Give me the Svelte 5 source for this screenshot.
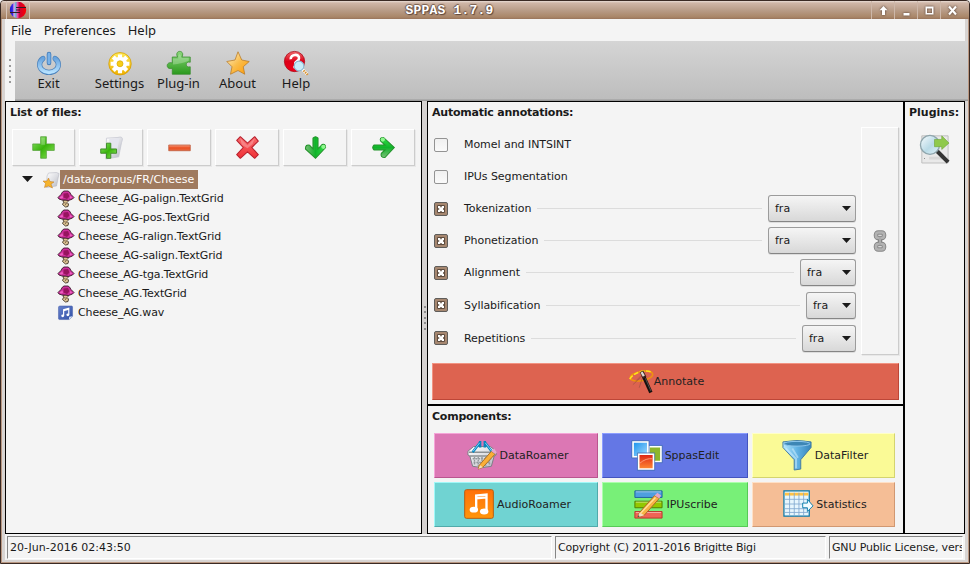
<script>
  const tools = [
    { id: 'exit', label: 'Exit', w: 58 },
    { id: 'settings', label: 'Settings', w: 62 },
    { id: 'plugin', label: 'Plug-in', w: 56 },
    { id: 'about', label: 'About', w: 62 },
    { id: 'help', label: 'Help', w: 55 }
  ];
  const fileButtons = ['plus', 'adddir', 'minus', 'cross', 'down', 'right'];
  const files = ['Cheese_AG-palign.TextGrid', 'Cheese_AG-pos.TextGrid', 'Cheese_AG-ralign.TextGrid', 'Cheese_AG-salign.TextGrid', 'Cheese_AG-tga.TextGrid', 'Cheese_AG.TextGrid'];
  const steps = [
    { name: 'Momel and INTSINT', on: false, h: 32 },
    { name: 'IPUs Segmentation', on: false, h: 32 },
    { name: 'Tokenization', on: true, w: 88, h: 32 },
    { name: 'Phonetization', on: true, w: 88, h: 32 },
    { name: 'Alignment', on: true, w: 56, h: 33 },
    { name: 'Syllabification', on: true, w: 50, h: 33, late: true },
    { name: 'Repetitions', on: true, w: 54, h: 33, late: true }
  ];
  const components = [
    { id: 'basket', name: 'DataRoamer', cls: 'pink' },
    { id: 'images', name: 'SppasEdit', cls: 'blue' },
    { id: 'funnel', name: 'DataFilter', cls: 'yellow' },
    { id: 'audio', name: 'AudioRoamer', cls: 'teal' },
    { id: 'scribe', name: 'IPUscribe', cls: 'green' },
    { id: 'table', name: 'Statistics', cls: 'peach' }
  ];
</script>

{#snippet icon(id, size)}
  <svg width={size} height={size} viewBox="0 0 32 32" class="ic">
    {#if id === 'exit'}
      <path d="M8 10A12.500 10.500 0 1 0 24 10" fill="none" stroke="#4b83bd" stroke-width="7" stroke-linecap="round" />
      <path d="M8 10A12.500 10.500 0 1 0 24 10" fill="none" stroke="url(#gblue)" stroke-width="5" stroke-linecap="round" />
      <path d="M16 4V15" stroke="#c8cdd3" stroke-width="9" />
      <path d="M16 4V16" stroke="#3f78b6" stroke-width="6" stroke-linecap="round" />
      <path d="M16 4V15.500" stroke="#79b2e8" stroke-width="4" stroke-linecap="round" />
    {:else if id === 'settings'}
      <circle cx="16" cy="17" r="15" fill="url(#ggold)" stroke="#d39b00" />
      <path d="M16 4.500V29.500M3.500 17H28.500M7 8L25 26M25 8L7 26" stroke="#fff" stroke-width="5.500" />
      <circle cx="16" cy="17" r="9.500" fill="#fff" />
      <circle cx="16" cy="17" r="4" fill="#f7ce18" stroke="#d9a900" />
    {:else if id === 'plugin'}
      <path d="M7 31V23C-2 26-2 13 7 16V8H14C9-2 25-2 20 8H31V15C24 13 24 23 31 21V31Z" fill="url(#ggreen)" stroke="#388b2d" />
      <path d="M8 10H15C14 3 19 2 19 9H29V13C21 16 17 17 8 18Z" fill="#fff" opacity=".25" />
    {:else if id === 'about'}
      <path d="M16 1L21 12L31 14L23 21L25 31L16 26L6 31L8 21L1 14L12 12Z" fill="url(#gstar)" stroke="#b77a26" />
    {:else if id === 'help'}
      <circle cx="14" cy="14" r="13.5" fill="url(#gred)" stroke="#a70010" />
      <path d="M9 11C8 4 21 3 20 10C20 14 14 14 15 17" fill="none" stroke="#fff" stroke-width="3.5" /><path d="M12.500 20H16V23H12.500Z" fill="#fff" />
      <circle cx="20" cy="20" r="6.5" fill="#c9edf9" stroke="#8bb9d2" stroke-width="1.5" />
      <path d="M25 25L31 31" stroke="#fff" stroke-width="4" /><path d="M26 26L32 32" stroke="#d79232" stroke-width="3" stroke-dasharray="2 1" />
    {:else if id === 'plus'}
      <path d="M12 1H20V11H31V20H20V31H12V20H1V11H12Z" fill="url(#gplus)" stroke="#4f9c34" />
      <path d="M13 2H18V12H13Z" fill="#fff" opacity=".25" />
    {:else if id === 'minus'}
      <path d="M1 12.500H31V20.500H1Z" fill="url(#gminus)" stroke="#bb5535" />
    {:else if id === 'adddir'}
      <path d="M9 3L25 2C32 0 32 4 30 9L26 29L8 32Z" fill="url(#gsilver)" stroke="#c3c5cf" />
      <path d="M13 4L27 3L23 24L11 27Z" fill="#e4e5ee" />
      <path d="M9 10H15V18H23V24H15V31H9V24H1V18H9Z" fill="url(#gplus)" stroke="#3c8926" stroke-width="1.3" />
    {:else if id === 'folder'}
      <path d="M11 2L27 1L32 3L27 28L7 31L8 8Z" fill="url(#gsilver)" stroke="#aeb1bd" />
      <path d="M11 12L14 19L22 20L16 24L19 32L11 28L3 31L5 23L0 18L8 18Z" fill="#f6b42d" stroke="#bd7626" />
    {:else if id === 'cross'}
      <path d="M6 1L16 10L26 1L31 7L22 16L31 26L26 31L16 22L6 31L1 26L10 16L1 6Z" fill="url(#gcross)" stroke="#b9202d" stroke-width="1.500" stroke-linejoin="round" />
      <path d="M6 3L16 13L26 3L23 11L16 17L8 12Z" fill="#fff" opacity=".25" />
    {:else if id === 'down' || id === 'right'}
      <g transform={id === 'right' ? 'rotate(-90 16 16)' : ''}>
        <path d="M12.500 3Q16-1 19.500 3V18L25 12Q30 10 30 16L16 31L2 18Q2 11 8 13L12.500 18Z" fill="url(#garrow)" stroke="#22932a" stroke-width="1.500" />
        <circle cx="27" cy="15" r="3" fill="#a7ffa1" opacity=".8" />
      </g>
    {:else if id === 'mushroom'}
      <path d="M10 18H21L20 21L18 23L21 26L20 31L15 32L9 27L11 23Z" fill="#dcc291" stroke="#514535" stroke-width="2" />
      <path d="M12 23L17 25L14 28" fill="none" stroke="#6b5a42" stroke-width="1.500" />
      <path d="M0 13L6 7L9 2L12 0H20L23 2L26 7L32 13L29 16L21 19L15 18L8 18L2 16Z" fill="#cd2f9b" stroke="#3c1a2c" stroke-width="1.800" />
      <path d="M3 13L9 9L10 14L6 15ZM23 9L29 13L24 15Z" fill="#ee62c2" /><path d="M11 5L20 4L23 11L18 16L11 13Z" fill="#97145f" />
    {:else if id === 'wav'}
      <path d="M3 2H29Q31 2 31 5V24L24 31H3Q1 31 1 28V4Z" fill="url(#gwav)" stroke="#3d56a6" />
      <path d="M12 23V10L23 7V21M12 12L23 9" fill="none" stroke="#fff" stroke-width="2.500" /><circle cx="10" cy="23" r="3" fill="#fff" /><circle cx="21" cy="21" r="3" fill="#fff" />
      <path d="M23 32L31 24L24 25Z" fill="#d9e6fa" />
    {:else if id === 'wand'}
      <ellipse cx="16" cy="9" rx="14.5" ry="6" transform="rotate(-10 16 9)" fill="none" stroke="#ef9110" stroke-width="2" />
      <path d="M1 13C5 5 21 0 29 4" fill="none" stroke="#ffe21c" stroke-width="2" stroke-dasharray="6 2" />
      <path d="M8 16L15 9M5 20L16 10M13 24L17 12" stroke="#5c3a31" opacity=".4" />
      <path d="M18 8L28 30" stroke="#17120f" stroke-width="4.5" /><path d="M16 3L20 11" stroke="#3c211b" stroke-width="5" /><path d="M16 4L19 9" stroke="#dfd9d2" stroke-width="3" /><path d="M21 12L28 28" stroke="#646464" />
    {:else if id === 'basket'}
      <path d="M1 12L7 7H25L31 12V16L29 17L26 28Q16 31 6 28L3 17L1 16Z" fill="url(#gsilver)" stroke="#777c81" />
      <path d="M2 13H30M3 17H29" stroke="#8c9194" stroke-width="1.500" />
      <path d="M6 20H26M7 24H25M8 18V27M12 18V28M16 18V28M20 18V28M24 18V27" stroke="#92989b" stroke-width="1.5" stroke-dasharray="2 1" />
      <path d="M6 13L14 2.500M19 2.500L27 13M14 1V8M19 1V8" fill="none" stroke="#0685bd" stroke-width="2.600" /><path d="M6.500 12L13.500 3M19.500 3L26.500 12" stroke="#82d6fb" />
      <path d="M13 27L26 12L30 15L17 29L12 31Z" fill="#faae37" stroke="#a46d27" /><path d="M26 12L29 9L32 13L30 15Z" fill="#e7a7cf" /><path d="M12 31L14 27L17 29Z" fill="#f7dbb5" />
    {:else if id === 'images'}
      <path d="M18 7H31V23H18Z" fill="#8db62b" stroke="#fff" stroke-width="2" /><path d="M1 2H17V18H1Z" fill="url(#gpic)" stroke="#fff" stroke-width="2" />
      <path d="M-.2 .8H18.200V14M18.200 5.800H32.200V24.200H24.200M7 19.200H-.2V.8" fill="none" stroke="#406fb0" stroke-width=".8" />
      <path d="M7 15H23V31H7Z" fill="url(#gorange)" stroke="#fff" stroke-width="2" /><path d="M5.800 13.800H24.200V32.200H5.800Z" fill="none" stroke="#406fb0" stroke-width=".8" />
      <path d="M8 25Q15 19 22 20" stroke="#ff9a7a" fill="none" />
    {:else if id === 'funnel'}
      <path d="M1 2Q16-1 31 2V8L20 21V31L13 32V21L1 8Z" fill="url(#gfunnel)" stroke="#41799f" />
      <ellipse cx="16" cy="4" rx="14" ry="2.5" fill="#3d86b5" stroke="#8fc7ed" /><path d="M4 9L15 20V30M11 9L17 19" fill="none" stroke="#d6f2ff" stroke-width="2" opacity=".5" />
    {:else if id === 'audio'}
      <rect x=".7" y=".7" width="30.6" height="30.6" rx="2" fill="url(#gaudio)" stroke="#b65a0c" />
      <path d="M13 22V7L24 6V24M13 10L24 9" fill="none" stroke="#fff" stroke-width="2.5" /><ellipse cx="10.5" cy="22" rx="4.5" ry="3.2" fill="#fff" /><ellipse cx="21.5" cy="24" rx="4.5" ry="3.2" fill="#fff" />
    {:else if id === 'scribe'}
      <path d="M2 2H31V9H2Z" fill="#4e9fdf" stroke="#1f5e9d" /><path d="M2 13H31V20H2Z" fill="#94c700" stroke="#517900" /><path d="M2 24H31V31H2Z" fill="#ef6455" stroke="#b8332b" />
      <path d="M3 3H30M3 14H30M3 25H30" stroke="#fff" opacity=".5" />
      <path d="M7 25L23 7L28 10L12 28L5 30Z" fill="#f8b245" stroke="#a36725" /><path d="M8 26L24 9" stroke="#ffe198" stroke-width="1.5" /><path d="M23 7L26 4L30 7L28 10Z" fill="#e3a5c5" /><path d="M5 30L7 25L12 28Z" fill="#f5ddbd" /><path d="M5 30L6 28L7 29Z" fill="#222" />
    {:else if id === 'table'}
      <path d="M1 2H28V29H1Z" fill="#e7f6fd" stroke="#0877a8" stroke-width="1.3" /><path d="M2 4H27V7H2Z" fill="#ffc245" />
      <path d="M7 4V29M12 4V29M17 4V29M22 4V29M2 11H27M2 16H27M2 21H27M2 25H27" stroke="#81a9cf" stroke-width=".9" />
      <path d="M21 15H26V11L32 18L26 24V20H21Z" fill="#f1fcff" stroke="#087cab" />
    {:else if id === 'search'}
      <path d="M2 2H31V32H2Z" fill="#e9e9e9" stroke="#bbb" /><path d="M10 25H27V28H10Z" fill="#d8d8d8" /><circle cx="5" cy="27" r=".6" fill="#777" />
      <path d="M18 18L22 22" stroke="#888" stroke-width="2.500" /><path d="M19 19L31 31" stroke="#343434" stroke-width="4.5" /><circle cx="11" cy="12" r="10.5" fill="url(#gglass)" stroke="#8fa5ac" stroke-width="1.5" />
      <path d="M16 6H24V2L32 10L24 17V14H16Z" fill="#8fc94b" stroke="#70a73b" stroke-width=".7" />
    {/if}
  </svg>
{/snippet}

<svg width="0" height="0" class="defs">
  <defs>
    <linearGradient id="gblue" x2="0" y2="1"><stop stop-color="#6aa5df" /><stop offset="1" stop-color="#b5e1ff" /></linearGradient>
    <linearGradient id="ggold" x2="0" y2="1"><stop stop-color="#ffea54" /><stop offset="1" stop-color="#efb000" /></linearGradient>
    <linearGradient id="ggreen" x2="0" y2="1"><stop stop-color="#8bd77b" /><stop offset="1" stop-color="#2b991c" /></linearGradient>
    <linearGradient id="gstar" x2="1" y2="1"><stop stop-color="#fff4d1" /><stop offset=".5" stop-color="#fabd4c" /><stop offset="1" stop-color="#ff9900" /></linearGradient>
    <linearGradient id="gred" x2="0" y2="1"><stop stop-color="#ef6a6d" /><stop offset=".5" stop-color="#dd0017" /><stop offset="1" stop-color="#ef0019" /></linearGradient>
    <linearGradient id="gplus" x2="1" y2="1"><stop stop-color="#8de46b" /><stop offset=".5" stop-color="#39b30b" /><stop offset="1" stop-color="#90e660" /></linearGradient>
    <linearGradient id="gminus" x2="0" y2="1"><stop stop-color="#f5a184" /><stop offset=".5" stop-color="#ec5022" /><stop offset="1" stop-color="#e66c43" /></linearGradient>
    <linearGradient id="gsilver" x2="1" y2="1"><stop stop-color="#fff" /><stop offset=".5" stop-color="#dedfe4" /><stop offset="1" stop-color="#b6b8c1" /></linearGradient>
    <linearGradient id="gcross" x2="0" y2="1"><stop stop-color="#f86b6d" /><stop offset="1" stop-color="#f03036" /></linearGradient>
    <linearGradient id="garrow" x2="1" y2="0"><stop stop-color="#78bd76" /><stop offset=".5" stop-color="#10b42a" /><stop offset="1" stop-color="#31e447" /></linearGradient>
    <linearGradient id="gwav" x2="1" y2="1"><stop stop-color="#6680ca" /><stop offset="1" stop-color="#3151a8" /></linearGradient>
    <linearGradient id="gpic" x2="1" y2="1"><stop stop-color="#1592ec" /><stop offset="1" stop-color="#a8ddff" /></linearGradient>
    <linearGradient id="gorange" x2="0" y2="1"><stop stop-color="#dc2013" /><stop offset="1" stop-color="#ff8b35" /></linearGradient>
    <linearGradient id="gfunnel" x2="1" y2="0"><stop stop-color="#b8e9ff" /><stop offset=".5" stop-color="#62b3e4" /><stop offset="1" stop-color="#3785bc" /></linearGradient>
    <linearGradient id="gaudio" x2="0" y2="1"><stop stop-color="#ff7008" /><stop offset="1" stop-color="#ff960a" /></linearGradient>
    <linearGradient id="gglass" x2="1" y2="1"><stop stop-color="#f8fcfe" /><stop offset=".55" stop-color="#b9dae6" /><stop offset="1" stop-color="#e1f2f8" /></linearGradient>
    <linearGradient id="glogo" x2="1" y2="0"><stop stop-color="#1414cf" /><stop offset=".18" stop-color="#3b2de8" /><stop offset=".25" stop-color="#e9a4e5" /><stop offset=".36" stop-color="#63b8d5" /><stop offset=".47" stop-color="#e84cae" /><stop offset=".6" stop-color="#d0002d" /><stop offset="1" stop-color="#ff0000" /></linearGradient>
  </defs>
</svg>

<div class="window">
  <header class="title">
    <div class="logo">
      <svg width="18" height="18" viewBox="0 0 18 18"><circle cx="9" cy="9" r="8.2" fill="url(#glogo)" /><path d="M9 6.500H17M1 11.500H9M7 6.500H11M7 9H11M8 11.500H11" stroke="#351923" stroke-width="1.100" /></svg>
    </div>
    <h1>SPPAS 1.7.9</h1>
    <div class="wm">
      <span><svg viewBox="0 0 9 9"><path d="M4.5 0L8.500 4.200H6V9H3V4.200H.5Z" /></svg></span>
      <span><svg viewBox="0 0 9 9"><path d="M1.5 7H7.5V9.500H1.5Z" /></svg></span>
      <span><svg viewBox="0 0 9 9"><path d="M.5.5H8.5V8.5H.5ZM2 2.500V7H7V2.500Z" fill-rule="evenodd" /></svg></span>
      <span><svg viewBox="0 0 9 9"><path d="M1 .500L8 8.500M8 .500L1 8.500" fill="none" stroke="#fff" stroke-width="2.100" /></svg></span>
    </div>
  </header>

  <div class="client">
    <nav class="menu"><span>File</span><span>Preferences</span><span>Help</span></nav>
    <div class="toolrow">
      <div class="grip"><i></i><i></i><i></i><i></i><i></i></div>
      <div class="toolbar">
        {#each tools as t}
          <button class="tool {t.id}" style="width:{t.w}px">{@render icon(t.id, 24)}<span>{t.label}</span></button>
        {/each}
      </div>
    </div>

    <main>
      <section class="files">
        <h2>List of files:</h2>
        <div class="fbtns">
          {#each fileButtons as b}<button class="raised">{@render icon(b, 23)}</button>{/each}
        </div>
        <ul>
          <li class="root"><svg class="tri" width="11" height="6" viewBox="0 0 11 6"><path d="M0 0H11L5.5 6Z" fill="#1a1a1a" /></svg>{@render icon('folder', 16)}<span class="sel">/data/corpus/FR/Cheese</span></li>
          {#each files as f}<li>{@render icon('mushroom', 16)}<span>{f}</span></li>{/each}
          <li>{@render icon('wav', 15)}<span class="wv">Cheese_AG.wav</span></li>
        </ul>
      </section>

      <div class="sash"><i></i><i></i><i></i><i></i><i></i></div>

      <div class="mid">
        <section class="auto">
          <h2>Automatic annotations:</h2>
          <div class="annot">
            <div class="steps">
              {#each steps as s}
                <div class="step" class:late={s.late} class:align={s.name === 'Alignment'} style="height:{s.h}px">
                  <span class="check" class:on={s.on}>
                    {#if s.on}<svg width="14" height="14" viewBox="0 0 14 14"><path d="M3.5 3.5H10.5V10.5H3.5Z" fill="#fff" stroke="#5e4b3d" /><path d="M7 4V5.2M7 9V10M4 7H5.2M9 7H10" stroke="#5e4b3d" stroke-width="1.4" /></svg>{/if}
                  </span>
                  <span class="name">{s.name}</span>
                  {#if s.w}
                    <span class="rule"></span>
                    <button class="combo" style="width:{s.w}px">fra<svg width="9" height="5" viewBox="0 0 9 5"><path d="M0 0H9L4.5 5Z" fill="#1a1a1a" /></svg></button>
                  {/if}
                </div>
              {/each}
            </div>
            <button class="link raised">
              <svg width="14" height="22" viewBox="0 0 14 22"><g fill="none" stroke="#858585"><rect x="3" y="2.5" width="8" height="5.5" rx="2.2" stroke-width="4.5" /><rect x="3" y="14" width="8" height="5.5" rx="2.2" stroke-width="4.5" /><path d="M7 7V15" stroke-width="4.5" /></g><g fill="none" stroke="#b2b2b2"><rect x="3" y="2.5" width="8" height="5.5" rx="2.2" stroke-width="2.7" /><rect x="3" y="14" width="8" height="5.5" rx="2.2" stroke-width="2.7" /><path d="M7 7V15" stroke="#aaa" stroke-width="2" /></g></svg>
            </button>
          </div>
          <button class="annotate">{@render icon('wand', 25)}<span>Annotate</span></button>
        </section>
        <section class="comps">
          <h2>Components:</h2>
          <div class="grid">
            {#each components as c}
              <button class="comp {c.cls}">{@render icon(c.id, 30)}<span>{c.name}</span></button>
            {/each}
          </div>
        </section>
      </div>

      <section class="plugins"><h2>Plugins:</h2>{@render icon('search', 29)}</section>
    </main>

    <footer><span>20-Jun-2016 02:43:50</span><span>Copyright (C) 2011-2016 Brigitte Bigi</span><span>GNU Public License, vers</span></footer>
  </div>
</div>

<style>
  * { box-sizing: border-box; }
  :global(body) { margin: 0; overflow: hidden; background: #f4f4f4; }
  button { border: 0; background: none; padding: 0; margin: 0; font: inherit; color: inherit; }
  .defs { position: absolute; }
  .ic { display: block; flex: none; overflow: visible; }
  .window { width: 970px; height: 564px; border: 1px solid #3a2a24; border-radius: 4px 4px 0 0; background: #d8d4d2; font: 11px "DejaVu Sans", sans-serif; color: #1a1a1a; overflow: hidden; box-shadow: inset 0 0 0 1px #b99781; }
  .title { height: 18px; display: flex; align-items: center; background: linear-gradient(#e8dcd5 0, #cfb6a7 2px, #b99d89 9px, #a98668 16px, #98745b 18px); }
  .logo { width: 24px; height: 18px; margin-left: 5px; border: solid #d7c4b8; border-width: 0 1px; display: flex; justify-content: center; }
  h1 { flex: 1; margin: 0 2px 0 0; text-align: center; font: bold 13px "Liberation Mono", monospace; letter-spacing: .2px; color: #fff; text-shadow: 1px 1px 1px #5d4539, -1px 0 1px #74594b, 0 -1px 1px #74594b; }
  .wm { display: flex; height: 18px; padding-right: 6px; }
  .wm span { width: 23px; border-left: 1px solid #cdb7a9; display: flex; align-items: center; justify-content: center; }
  .wm span:first-child, .wm span:last-child { margin-right: 0; }
  .wm svg { width: 9px; height: 9px; overflow: visible; fill: #fff; filter: drop-shadow(0 0 1px #4b352b); }
  .client { margin: 0 4px; height: 541px; display: flex; flex-direction: column; background: #f4f4f4; }
  .menu { height: 22px; display: flex; gap: 12px; align-items: center; padding-left: 6px; font: 13px "Noto Sans", sans-serif; letter-spacing: -.03px; }
  .toolrow { height: 60px; display: flex; }
  .grip { width: 10px; display: flex; flex-direction: column; align-items: center; justify-content: center; gap: 3.5px; }
  .grip i, .sash i { width: 2px; height: 2px; background: #999; flex: none; }
  .toolbar { flex: 1; display: flex; background: linear-gradient(#d5d5d5, #bdbdbd 58px, #999 59px); padding: 10px 0 0 4.5px; margin-right: -3px; }
  .tool { display: flex; flex-direction: column; align-items: center; font: 13px/17px "Noto Sans", sans-serif; }
  .tool.settings { margin-left: 11px; }
  main { display: flex; height: 433px; }
  section { background: #f4f4f4; border: 1px solid #000; }
  h2 { margin: 0; font: bold 11px/13px "DejaVu Sans", sans-serif; letter-spacing: -.22px; white-space: nowrap; }
  .files { width: 417px; padding: 4px 4px; }
  .files h2 { letter-spacing: -.12px; }
  .fbtns { display: flex; gap: 4px; margin: 10px 2px 4px; }
  .raised { border: 1px solid; border-color: #fff #ccc #ccc #fff; box-shadow: 1px 1px 0 #e8e8e8; }
  .fbtns button { flex: none; width: 64px; height: 37px; display: flex; align-items: center; justify-content: center; }
  .fbtns button:first-child { width: 63px; }
  ul { list-style: none; margin: 0; padding: 0; }
  li { height: 19px; display: flex; align-items: center; padding-left: 48px; letter-spacing: -.12px; }
  li span { margin-left: 4px; }
  li .wv { margin-left: 5px; }
  .root { padding-left: 12px; letter-spacing: 0; }
  .root .tri { margin-right: 10px; position: relative; top: -1px; }
  .root .sel { margin-left: 1px; width: 138px; height: 19px; line-height: 19px; padding-left: 3px; background: #9f7a5e; color: #fff; }
  .sash { width: 5px; display: flex; flex-direction: column; align-items: center; justify-content: center; gap: 3.5px; background: #d5d2d1; }
  .sash i { background: #8c8c8c; }
  .mid { width: 477px; }
  .auto { height: 305px; width: 478px; padding: 4px; border-right-width: 2px; border-bottom-width: 2px; }
  .annot { display: flex; gap: 5px; margin: 8px 0; height: 228px; }
  .steps { width: 424px; padding-top: 1px; }
  .step { display: flex; align-items: center; padding-left: 2px; }
  .check { width: 14px; height: 14px; border: 1px solid #939393; border-radius: 2px; margin: 1px 16px 0 0; background: linear-gradient(#f0f0f0, #fafafa); }
  .align { padding-bottom: 1px; }
  .late .check { margin-top: -1px; }
  .name { letter-spacing: -.05px; }
  .check svg { display: block; margin: -1px; }
  .check.on { border-color: #5f5d5a; background: #a68770; }
  .rule { flex: 1; height: 1px; background: #dcdcdc; margin: 0 6px; }
  .combo { height: 27px; display: flex; align-items: center; justify-content: space-between; padding: 0 4px 0 6px; border: 1px solid #9b9b9b; border-bottom-color: #858585; border-radius: 3px; background: linear-gradient(#f5f5f5, #d8d8d8); box-shadow: 0 1px 0 #ddd; }
  .link { width: 38px; display: flex; align-items: center; justify-content: center; }
  .annotate { width: 467px; height: 37px; display: flex; align-items: center; justify-content: center; background: #dd6350; border: 1px solid; border-color: #f29382 #bd4637 #bd4637 #f29382; color: #222; padding-left: 2px; }
  .comps { height: 128px; border-top: 0; border-right-width: 2px; width: 478px; padding: 4px; }
  .grid { display: grid; grid-template-columns: 164px 146px 143px; grid-template-rows: 45px 45px; gap: 4px; margin: 10px 2px 0; }
  .comp { display: flex; align-items: center; justify-content: center; gap: 3px; padding-left: 3px; border: 1px solid; color: #222; }
  .blue, .green { padding-left: 1px; }
  .comp .ic { position: relative; top: -1px; }
  .pink { background: #dc77b4; border-color: #f5a5d8 #ba568f #ba568f #f5a5d8; }
  .blue { background: #6477e5; border-color: #8c9dff #4454bf #4454bf #8c9dff; }
  .yellow { background: #fafa96; border-color: #ffffc8 #d4d46f #d4d46f #ffffc8; }
  .teal { background: #70d3d2; border-color: #a0f8f8 #50aaaa #50aaaa #a0f8f8; }
  .green { background: #78f078; border-color: #acffac #56ca56 #56ca56 #acffac; }
  .peach { background: #f5be96; border-color: #ffe0c6 #d19872 #d19872 #ffe0c6; }
  .plugins { flex: 1; border-left: 0; padding: 4px 0 0 4px; display: flex; flex-direction: column; align-items: flex-start; margin-left: 1px; }
  .plugins h2 { letter-spacing: 0; }
  .plugins .ic { margin: 15px 0 0 11px; }
  footer { height: 26px; padding: 2px 2px 1px; display: flex; gap: 3px; }
  footer span { width: 545px; flex: none; height: 23px; border: 1px solid; border-color: #858585 #fff #fff #858585; padding-left: 2px; line-height: 22px; white-space: nowrap; overflow: hidden; }
  footer span:nth-child(2) { width: 271px; letter-spacing: -.2px; }
  footer span:nth-child(3) { width: 134px; letter-spacing: -.16px; }
</style>
